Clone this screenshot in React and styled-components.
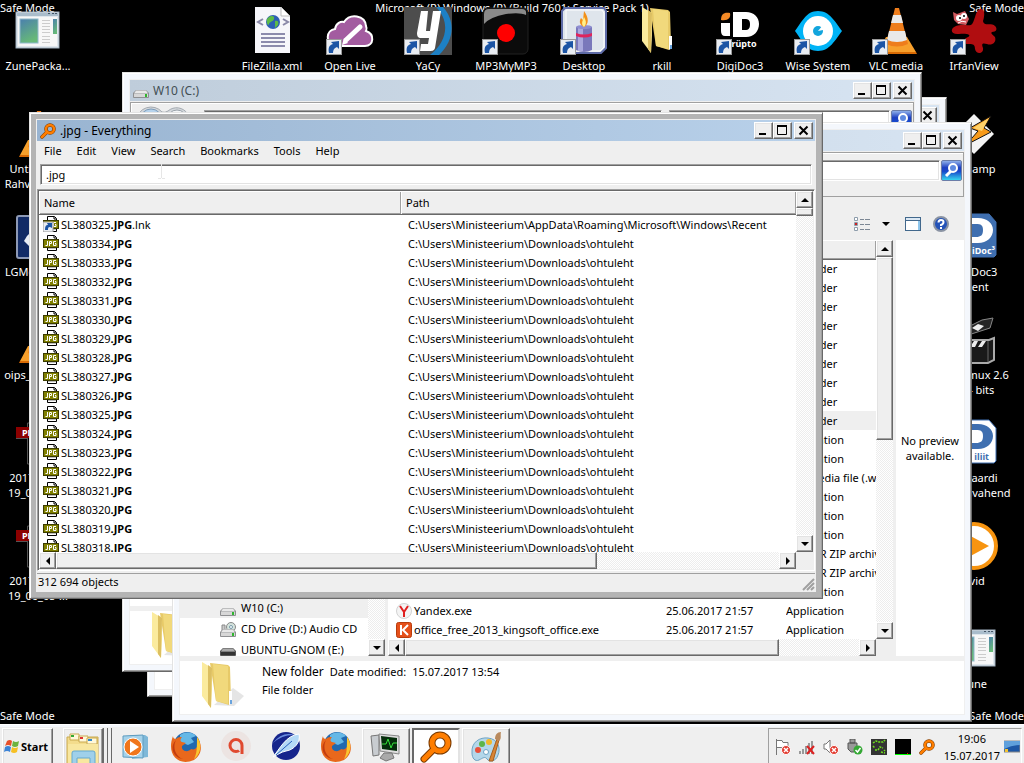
import React from "react";
import styled, { createGlobalStyle, css } from "styled-components";

const face = "#efefef";
const checker = "repeating-conic-gradient(#ffffff 0 25%, #ededed 0 50%) 0 0 / 2px 2px";

const Global = createGlobalStyle`
  html, body { margin: 0; height: 100%; }
  #root { height: 100%; }
  *, *::before, *::after { box-sizing: border-box; }
  body, button, input, table { font-family: "Noto Sans", "Open Sans", sans-serif; font-size: 11px; line-height: 15px; color: #000; }
  button { padding: 0; border: 0; background: none; }
`;

const raised = css`
  background: ${face};
  border: 1px solid;
  border-color: #fff #696969 #696969 #fff;
  box-shadow: inset -1px -1px 0 #a0a0a0, inset 1px 1px 0 #e3e3e3;
`;

/* ---------- desktop ---------- */

const Screen = styled.div`
  height: 100%;
  display: flex;
  flex-direction: column;
  overflow: hidden;
  background: #000;
`;

const Desktop = styled.main`
  position: relative;
  flex: 1;
  min-height: 0;
  overflow: hidden;
  color: #fff;
`;

const Watermark = styled.div`
  position: absolute;
  ${(p) => (p.$bottom ? "bottom: 0;" : "top: 0;")}
  ${(p) => (p.$right ? "right: 0;" : "left: 0;")}
  ${(p) => p.$center && "right: 0; text-align: center;"}
  line-height: 16px;
  white-space: nowrap;
`;

const Shortcut = styled.button`
  position: absolute;
  left: ${(p) => p.$x}px;
  top: ${(p) => p.$y}px;
  width: 78px;
  display: flex;
  flex-direction: column;
  align-items: center;
  gap: 3px;
  color: #fff;
  text-align: center;
  white-space: pre;
`;

const Picture = styled.svg`
  display: block;
  width: ${(p) => p.$size || 48}px;
  height: ${(p) => p.$size || 48}px;
  flex: none;
`;

const Pointer = styled.svg`
  position: absolute;
  left: 157px;
  top: 164px;
  width: 8px;
  height: 15px;
`;

/* ---------- pictures ---------- */

const Pic = ({ size, box = 48, children }) => (
  <Picture $size={size} viewBox={`0 0 ${box} ${box}`} aria-hidden="true">{children}</Picture>
);

const Arrow = () => (
  <g>
    <rect x="0.5" y="32.5" width="15" height="15" fill="#e9edf2" stroke="#9a9a9a" />
    <path d="M3 46c-1-5 0-8 4-9l-2-2 8-1v8l-2-2c-3 1-4 3-4 6z" fill="#1c55a5" />
  </g>
);

const WindowPic = () => (
  <Pic>
    <rect x="2" y="5" width="43" height="36" fill="#dfe6ec" stroke="#9fb0bf" />
    <rect x="3" y="6" width="41" height="3" fill="#a9bccb" />
    <path d="M34 6.500h2M38 6.500h2M41 6.500h2" stroke="#456" />
    <rect x="4" y="10" width="39" height="29" fill="#f7f7f7" />
    <defs>
      <linearGradient id="zune" x1="0" y1="0" x2="0.4" y2="1">
        <stop offset="0" stopColor="#4a7fae" /><stop offset="1" stopColor="#67b978" />
      </linearGradient>
    </defs>
    <rect x="6" y="12" width="18" height="24" fill="url(#zune)" stroke="#8fb8cc" />
    <path d="M28 13.500h8M28 16.500h8M28 19.500h8M28 22.500h8M28 25.500h8M28 29.500h8M28 32.500h8M28 35.500h8" stroke="#ccc" />
    <rect x="39" y="12" width="4" height="15" fill="url(#zune)" />
  </Pic>
);

const XmlPic = () => (
  <Pic>
    <path d="M7 0h26l9 9v37H7z" fill="#f6f6fa" />
    <path d="M33 0v9h9z" fill="#fff" stroke="#bbb" />
    <circle cx="25" cy="15" r="7" fill="#2d5fb4" />
    <path d="M21 10c3-2 6-1 5 2s-4 2-5 5-3-2-2-5zM27 14c3-1 4 1 3 4l-3 3z" fill="#5dbb46" />
    <path d="M15 12l-5 3 5 3M35 12l5 3-5 3" fill="none" stroke="#8a89a8" strokeWidth="2" />
    <path d="M13 27h24M13 31h24M13 35h24M13 39h24" stroke="#8c8bac" strokeWidth="2" />
  </Pic>
);

const CloudPic = () => (
  <Pic>
    <path d="M8 39C-1 36 0 23 9 22c1-6 6-8 9-7 6-9 21-7 22 4 1 2 1 3 0 5 9 3 8 15-1 15z" fill="#a35ca0" stroke="#fff" strokeWidth="2" />
    <path d="M16 38l2-7 4 5z" fill="#fff" />
    <path d="M20 33l14-13" stroke="#fff" strokeWidth="5" strokeLinecap="round" />
    <Arrow />
  </Pic>
);

const YacyPic = () => (
  <Pic>
    <rect width="48" height="48" fill="#4d4d4d" />
    <path d="M32 0c14 14 12 34-6 48h9c15-14 17-34 4-48z" fill="#1d80c4" />
    <path d="M17 4h7l-2 20h4l3-20h8l-6 37c-1 3-3 3-6 3h-9l1-7h7l1-6h-8c-3 0-4-2-4-5z" fill="#fff" />
    <Arrow />
  </Pic>
);

const RecordPic = () => (
  <Pic>
    <rect x="1" y="1" width="45" height="46" rx="5" fill="#0b0b0b" stroke="#222" />
    <path d="M2 7q0-5 5-5h33q5 0 4 6-6-3-20-1Q8 10 2 17z" fill="#aaa" opacity="0.800" />
    <circle cx="24" cy="26" r="9" fill="#f00" />
    <Arrow />
  </Pic>
);

const CandlePic = () => (
  <Pic>
    <path d="M5 1h39l2 3v37l-5 5H5l-3-3V4z" fill="#dfe5ec" stroke="#5d6aa6" strokeWidth="2" />
    <path d="M6 3h36l2 3v34l-4 4H6z" fill="none" stroke="#fff" />
    <path d="M16 20h16v23q-8 4-16 0z" fill="#7a78bb" />
    <path d="M18 20h5v24h-5z" fill="#aaa9dd" />
    <ellipse cx="24" cy="20" rx="8" ry="2" fill="#8f8ed0" />
    <path d="M16 26q8 3 16 0v3q-8 3-16 0z" fill="#e0245c" />
    <path d="M24 4c5 7 5 13 0 16-6-3-4-7-3-9l2 2z" fill="#f39019" />
    <path d="M24 10c3 5 2 8 0 10-3-3-2-5 0-10z" fill="#fff08a" />
    <Arrow />
  </Pic>
);

const FolderShape = ({ shadow }) => (
  <g>
    {shadow && <path d="M14 43l20 1 10-10-11-8z" fill="#ccc" opacity="0.500" />}
    <path d="M10 1l18 2 2 2 1 33-2 5-13-4z" fill="#e7ca68" />
    <path d="M13 2l15 2v38l-12-3z" fill="#f1d97c" />
    <path d="M2 0l10 6v22l-1 18-9-12z" fill="#fbeb9e" />
    <path d="M8 3l4 3-1 40-3-4z" fill="#dcbf62" />
    <path d="M29 29h3v12l-3 2z" fill="#fff" /><path d="M30 38h2v4h-2z" fill="#6aa4dd" />
  </g>
);

const FolderPic = () => <Pic><g transform="translate(2 0)"><FolderShape /></g></Pic>;

const DigiPic = () => (
  <Pic>
    <path d="M5 16h9v13H9q-4 0-4-5z" fill="#fff" />
    <path d="M5 13c0-6 3-8 9-7 1 5-2 8-9 7z" fill="#f58a26" />
    <path d="M17 5h13c8 0 13 5 13 12s-5 13-13 13H17zM26 12v11h3c4 0 5-2 5-6s-2-5-5-5z" fill="#fff" fillRule="evenodd" />
    <text x="28" y="40" fontSize="9" fontWeight="700" fill="#fff" textAnchor="middle">rüpto</text>
    <Arrow />
  </Pic>
);

const EyePic = () => (
  <Pic>
    <path d="M1 24C8 15 12 4 24 4s17 11 24 20c-7 9-12 20-24 20S8 33 1 24z" fill="#00b3f6" />
    <circle cx="24" cy="24" r="15" fill="#fff" />
    <circle cx="24" cy="24" r="5" fill="#12a5dd" />
    <path d="M24 24l5-6v5z" fill="#fff" />
    <Arrow />
  </Pic>
);

const ConePic = ({ arrow }) => (
  <Pic>
    <path d="M14 30h21l9 15H6z" fill="#f7a02c" /><path d="M6 45h38l1 2H5z" fill="#d96b05" />
    <path d="M23 1h4l9 36q-11 5-22 0z" fill="#ee7d1c" />
    <path d="M21 8h8l2 8H19zM17 24h16l2 9q-10 4-20 0z" fill="#e9e9e9" />
    {arrow && <Arrow />}
  </Pic>
);

const SplatPic = () => (
  <Pic>
    <path d="M21 18c4-2 4-15 9-16s5 6 3 12c1 6 8 1 12 5 3 3 1 6-3 6-2 1 1 3 3 5 2 6-4 9-8 7-4-1-6-1-4 4 1 6-7 7-8 1 0-6-4-5-8-5s-5-5 1-7c4-2-1-4-9-3-9 1-9-6-3-8s10 0 15-1z" fill="#b00d10" />
    <path d="M3 5l4 2 8-3 4 8-3 6-8-1-4-4z" fill="#d25a60" />
    <circle cx="9" cy="11" r="3" fill="#fff" /><circle cx="14" cy="9" r="3" fill="#fff" />
    <circle cx="10" cy="11" r="1" /><circle cx="14" cy="9" r="1" /><path d="M8 16q4-3 8-1" stroke="#fff" fill="none" />
    <Arrow />
  </Pic>
);

const BoltPic = () => (
  <Pic>
    <path d="M24 4l20 20-20 20L4 24z" fill="#f4f4f4" />
    <path d="M41 6L20 18l8 3-12 14 25-13-7-4z" fill="#f79a19" stroke="#111" />
    <path d="M39 8L23 18l9 3" fill="#ffd26a" />
  </Pic>
);

const BadgePic = ({ word, inverse }) => {
  const paper = inverse ? "#fff" : "#3f6fb0";
  const ink = inverse ? "#3f6fb0" : "#fff";
  return (
    <Pic>
      <path d="M3 1h36l7 8v33l-2 2H3z" fill={paper} stroke="#3f6fb0" />
      <path d="M8 5h20c9 0 15 5 15 12s-6 13-15 13H8zM22 11v13h4c5 0 7-2 7-7s-2-6-7-6z" fill={ink} fillRule="evenodd" />
      <text x={inverse ? 39 : 45} y="41" fontSize="9" fontWeight="700" fill={ink} textAnchor="end">{word}</text>
    </Pic>
  );
};

const ClapperPic = () => (
  <Pic>
    <path d="M8 16L32 4l11-2-3 10-28 9z" fill="#252525" stroke="#888" />
    <path d="M22 12l6-4 6 2-6 5z" fill="#eee" />
    <path d="M5 24h34l5-2v22l-6 3H5z" fill="#1a1a1a" stroke="#aaa" strokeWidth="2" />
    <path d="M24 25h4l-3 6h-5zM32 25h4l-4 6h-4z" fill="#eee" />
    <path d="M38 25v21" stroke="#666" />
  </Pic>
);

const PlayPic = () => (
  <Pic>
    <circle cx="24" cy="24" r="22" fill="#fff" stroke="#f79410" strokeWidth="4" />
    <path d="M15 11l24 13-24 13z" fill="#f79410" />
  </Pic>
);

const PdfPic = () => (
  <Pic>
    <path d="M13.500 4v41h27V4z" fill="#000" stroke="#555" />
    <rect x="2" y="8" width="31" height="11" fill="#8c0000" />
    <path d="M2 19.500h11" stroke="#555" />
    <text x="8" y="17" fontSize="9" fontWeight="700" fill="#fff">PDF</text>
  </Pic>
);

const BluePic = () => (
  <Pic>
    <rect x="3" y="3" width="42" height="42" rx="2" fill="#122b66" stroke="#8d99b5" strokeWidth="2" />
    <path d="M10 28q3-6 8-10v18z" fill="#e8ecf4" />
  </Pic>
);

const Lens = ({ size }) => (
  <Pic size={size} box={32}>
    <path d="M14 18L4 28" stroke="#7a3a00" strokeWidth="7" strokeLinecap="round" />
    <circle cx="20" cy="12" r="8" fill="none" stroke="#7a3a00" strokeWidth="7" />
    <path d="M14 18L4 28" stroke="#ff7e00" strokeWidth="5" strokeLinecap="round" />
    <circle cx="20" cy="12" r="8" fill="none" stroke="#ff7e00" strokeWidth="5" />
  </Pic>
);

const Drive = ({ kind }) => (
  <Pic size={16} box={16}>
    {kind === "cd" && <g><circle cx="11" cy="5" r="4.500" fill="#d5e4dd" stroke="#888" /><circle cx="11" cy="5" r="1.500" fill="#fff" stroke="#79a" /><path d="M2 3h3v6H2z" fill="#ccc" stroke="#888" /></g>}
    <path d="M3 7h10l3 3v4q0 1-1 1H1q-1 0-1-1v-4z" fill={kind === "usb" ? "#555" : "#8f9092"} />
    <path d="M3 7.500h10l2 3H1z" fill={kind === "usb" ? "#aaa" : "#e9e9e9"} />
    <path d="M1 11h14v3H1z" fill={kind === "usb" ? "#333" : "#d7d7d7"} />
    {kind !== "usb" && <path d="M12 11h2v3h-2z" fill="#2fb52f" />}
  </Pic>
);

const JpgIcon = ({ link }) => (
  <Pic size={16} box={16}>
    <path d="M4.500.5h7l2 2v13h-9z" fill="#fff" stroke="#000" />
    <path d="M11 1v2h2" fill="none" stroke="#000" />
    <path d="M5 13.500h8" stroke="#bbb" />
    <rect x="0.500" y="4.500" width="15" height="8" fill="#808000" stroke="#3c3c00" />
    <path d="M4.500 6v4.500h-2M6.500 11V6.500h2v2h-2M13 6.500h-2.500v4h2.500v-2h-1" fill="none" stroke="#fff" />
    {link && <g><rect y="6" width="10" height="10" fill="#e9edf2" stroke="#999" /><path d="M2 14c0-4 1-5 3-5l-1-2h5v5l-2-1c-2 0-2 1-2 3z" fill="#1c55a5" /></g>}
  </Pic>
);

const AppIcon = ({ kind }) =>
  kind === "yandex" ? (
    <Pic size={16} box={16}>
      <circle cx="8" cy="8" r="7.500" fill="#f4f4f4" stroke="#d2d2d2" />
      <path d="M4 3l4 6 4-6M8 8v6" fill="none" stroke="#e02020" strokeWidth="2" />
    </Pic>
  ) : (
    <Pic size={16} box={16}>
      <rect x="0.500" y="0.500" width="15" height="15" rx="2" fill="#e5501a" stroke="#b83c0c" />
      <path d="M5 3v10M12 3L7 8l5 5" fill="none" stroke="#fff" strokeWidth="2" />
    </Pic>
  );

/* ---------- window chrome ---------- */

const Frame = styled.section`
  position: absolute;
  left: ${(p) => p.$x}px;
  top: ${(p) => p.$y}px;
  width: ${(p) => p.$w}px;
  height: ${(p) => p.$h}px;
  display: flex;
  flex-direction: column;
  padding: 6px;
  color: #000;
  background: ${(p) => (p.$active ? "#b4b4b4" : "#f4f7fc")};
  border: 1px solid;
  border-color: #e3e3e3 #696969 #696969 #e3e3e3;
  box-shadow: inset 1px 1px 0 #fff, inset -1px -1px 0 #a0a0a0;
`;

const Client = styled.div`
  flex: 1;
  min-height: 0;
  display: flex;
  flex-direction: column;
  border: 1px solid ${face};
  background: ${face};
`;

const TitleBar = styled.header`
  flex: none;
  height: 21px;
  display: flex;
  align-items: center;
  gap: 4px;
  padding: 0 2px 0 3px;
  font-size: 12px;
  color: ${(p) => (p.$active ? "#000" : "#434e54")};
  background: ${(p) => (p.$active ? "linear-gradient(90deg, #99b4d1, #b9d1ea)" : "linear-gradient(90deg, #bfcddb, #d7e4f2)")};
`;

const TitleText = styled.h2`
  margin: 0;
  flex: 1;
  font: inherit;
`;

const Controls = styled.div`
  display: flex;
  button:last-child { margin-left: 2px; }
`;

const ControlButton = styled.button`
  ${raised}
  width: 19px;
  height: 17px;
  display: grid;
  place-items: center;
`;

const WindowControls = () => (
  <Controls>
    <ControlButton aria-label="Minimize"><Pic size={11} box={11}><path d="M1 9h7" stroke="#000" strokeWidth="2" /></Pic></ControlButton>
    <ControlButton aria-label="Maximize"><Pic size={11} box={11}><path d="M.5 1v8.500h9V1" fill="none" stroke="#000" /><path d="M0 1h10" stroke="#000" strokeWidth="2" /></Pic></ControlButton>
    <ControlButton aria-label="Close"><Pic size={11} box={11}><path d="M1.500 1.500l8 8M9.500 1.500l-8 8" stroke="#000" strokeWidth="2" /></Pic></ControlButton>
  </Controls>
);

/* ---------- scroll bars ---------- */

const Track = styled.div`
  flex: none;
  display: flex;
  flex-direction: ${(p) => (p.$across ? "row" : "column")};
  ${(p) => (p.$across ? "height: 17px;" : "width: 17px;")}
  background: ${checker};
`;

const ScrollButton = styled.button`
  ${raised}
  flex: none;
  width: 17px;
  height: 17px;
  display: grid;
  place-items: center;
`;

const Thumb = styled.div`
  ${raised}
  flex: 0 0 ${(p) => p.$size}px;
`;

const Space = styled.div`
  flex: 1;
`;

const glyphs = {
  Up: "M4 2l4 4H0z",
  Down: "M0 2h8L4 6z",
  Left: "M2 4l4-4v8z",
  Right: "M2 0l4 4-4 4z",
};

const Arrowhead = ({ to }) => (
  <ScrollButton aria-label={`Scroll ${to.toLowerCase()}`}>
    <Pic size={8} box={8}><path d={glyphs[to]} /></Pic>
  </ScrollButton>
);

const ScrollBar = ({ across, size }) => (
  <Track $across={across}>
    <Arrowhead to={across ? "Left" : "Up"} />
    <Thumb $size={size} />
    <Space />
    <Arrowhead to={across ? "Right" : "Down"} />
  </Track>
);

/* ---------- Explorer ---------- */

const AddressBar = styled.div`
  flex: none;
  height: 45px;
  display: flex;
  align-items: center;
  gap: 1px;
  margin-top: 1px;
  padding: 0 1px 9px 4px;
  border: 1px solid #a0a0a0;
  box-shadow: inset 1px 1px 0 #fff;
`;

const NavButtons = styled.svg`
  width: 56px;
  height: 28px;
  margin-right: 12px;
`;

const Field = styled.input`
  min-width: 0;
  height: 21px;
  padding: 0 5px;
  flex: 1;
  border: 1px solid;
  border-color: #a0a0a0 #fff #fff #a0a0a0;
  border-radius: 0;
  box-shadow: inset 1px 1px 0 #696969, inset -1px -1px 0 #e3e3e3;
  background: #fff;
  outline: 0;
`;

const AddressField = styled(Field)`
  flex: 0 0 458px;
  margin-right: 6px;
  background: ${face};
`;

const SearchButton = styled.button`
  flex: none;
  width: 21px;
  height: 21px;
  display: grid;
  place-items: center;
  border: 1px solid #6b7da8;
  border-radius: 2px;
  background: linear-gradient(#8fb0ea 0, #1d3fc0 35%, #1849cc 55%, #35d4ee);
`;

const CommandBar = styled.div`
  flex: none;
  height: 43px;
  display: flex;
  align-items: center;
  justify-content: flex-end;
  gap: 12px;
  padding: 10px 15px 0 0;
`;

const ToolButton = styled.button`
  width: ${(p) => (p.$slim ? 8 : 16)}px;
  height: ${(p) => (p.$slim ? 8 : 16)}px;
  ${(p) => p.$slim && "margin-right: 3px;"}
`;

const Panes = styled.div`
  flex: 1;
  min-height: 0;
  display: flex;
  gap: 3px;
`;

const Tree = styled.nav`
  flex: 0 0 205px;
  display: flex;
`;

const TreeList = styled.ul`
  flex: 1;
  margin: 0;
  padding: 0;
  display: flex;
  flex-direction: column;
  justify-content: flex-end;
  overflow: hidden;
  background: #fff;
  list-style: none;
`;

const TreeItem = styled.li`
  flex: none;
  height: ${(p) => (p.$cut ? 17 : 21)}px;
  display: flex;
  align-items: ${(p) => (p.$cut ? "flex-start" : "center")};
  gap: 5px;
  padding-left: 40px;
  line-height: 21px;
  white-space: nowrap;
  overflow: hidden;
  background: ${(p) => (p.$on ? face : "#fff")};
  svg { margin-top: 2px; }
`;

const Column = styled.div`
  flex: 1;
  min-width: 0;
  display: flex;
  flex-direction: column;
`;

const Row = styled.div`
  flex: 1;
  min-height: 0;
  display: flex;
`;

const HorizontalRow = styled.div`
  flex: none;
  display: flex;
`;

const Wide = styled.div`
  flex: 1;
  min-width: 0;
`;

const Sheet = styled.div`
  flex: 1;
  min-width: 0;
  overflow: hidden;
  background: #fff;
`;

const Grid = styled.table`
  width: 100%;
  table-layout: fixed;
  border-collapse: collapse;
  th {
    height: ${(p) => p.$head}px;
    padding: 0 5px;
    font-weight: 400;
    text-align: left;
    background: ${face};
    border-bottom: 1px solid #696969;
    box-shadow: inset 1px 1px 0 #fff, inset -1px -1px 0 #a0a0a0;
  }
  td {
    height: 19px;
    padding: 0;
    white-space: nowrap;
    overflow: hidden;
  }
`;

const FileRow = styled.tr`
  background: ${(p) => (p.$on ? face : "transparent")};
`;

const NameCell = styled.div`
  display: flex;
  align-items: center;
  gap: 2px;
  height: 19px;
  padding-left: ${(p) => p.$indent}px;
`;

const Corner = styled.div`
  flex: none;
  width: 17px;
  background: ${face};
`;

const Preview = styled.aside`
  flex: 0 0 68px;
  display: flex;
  align-items: center;
  justify-content: center;
  text-align: center;
  background: #fff;
`;

const Details = styled.footer`
  flex: 0 0 58px;
  display: flex;
  padding: 1px 0 0 20px;
  gap: 14px;
  border-top: 5px solid ${face};
  background: #fff;
`;

const DetailText = styled.div`
  display: flex;
  flex-direction: column;
  gap: 3px;
  padding-top: 2px;
`;

const DetailLine = styled.div`
  display: flex;
  gap: 6px;
  strong { font-size: 12px; font-weight: 400; }
`;

const files = [
  ...Array.from({ length: 9 }, () => ({ type: "File folder" })),
  { type: "Application" },
  { type: "Application" },
  { type: "VLC media file (.wmv)" },
  { type: "Application" },
  { type: "Application" },
  { type: "Application" },
  { type: "WinRAR ZIP archive" },
  { type: "WinRAR ZIP archive" },
  { type: "Application" },
  { type: "Application", name: "Yandex.exe", icon: "yandex", date: "25.06.2017 21:57" },
  { type: "Application", name: "office_free_2013_kingsoft_office.exe", icon: "office", date: "25.06.2017 21:57" },
];

const Explorer = ({ x, y, title, contents }) => (
  <Frame $x={x} $y={y} $w={800} $h={600} aria-label={title || "Folder"}>
    <Client>
      <TitleBar>
        <Drive />
        <TitleText>{title}</TitleText>
        <WindowControls />
      </TitleBar>
      <AddressBar>
        <NavButtons viewBox="0 0 56 28" aria-hidden="true">
          <path d="M2 14a14 13 0 0 1 25-8q3 1 6-1a13 13 0 1 1-4 13 14 13 0 0 1-27-4z" fill="#d4d8dc" stroke="#a3a9b0" />
          <circle cx="16" cy="14" r="11" fill="#b7d3ec" stroke="#7d9bb8" />
          <circle cx="42" cy="14" r="10" fill="#f2f4f6" stroke="#9aa2aa" />
        </NavButtons>
        <AddressField aria-label="Address" />
        <Field aria-label="Search folder" />
        <SearchButton aria-label="Search">
          <Pic size={17} box={17}><path d="M8 9l-5 5" stroke="#fff" strokeWidth="3" /><circle cx="10" cy="6" r="4" fill="#5f8ae0" stroke="#fff" strokeWidth="2" /></Pic>
        </SearchButton>
      </AddressBar>
      <CommandBar>
        <ToolButton aria-label="View">
          <Pic size={16} box={16}>
            <path d="M.5 1.500h3v3h-3zM.5 6.500h3v3h-3zM.5 11.500h3v3h-3z" fill="#fff" stroke="#8d9cab" />
            <path d="M6 3.500h4m1 0h5M6 8.500h4m1 0h5M6 13.500h4m1 0h5" stroke="#7c8794" />
            <path d="M1 7h2v2H1z" fill="#c22" />
          </Pic>
        </ToolButton>
        <ToolButton $slim aria-label="More views"><Pic size={8} box={8}><path d="M0 2h8L4 6z" /></Pic></ToolButton>
        <ToolButton aria-label="Preview pane">
          <Pic size={16} box={16}>
            <rect x="0.500" y="1.500" width="15" height="13" fill="#fff" stroke="#42688c" />
            <path d="M1 3h14" stroke="#dbe8f4" strokeWidth="2" /><path d="M1 4.500h14" stroke="#42688c" /><path d="M13 5h2v9h-2z" fill="#8fc6ec" />
          </Pic>
        </ToolButton>
        <ToolButton aria-label="Help">
          <Pic size={16} box={16}>
            <circle cx="8" cy="8" r="7" fill="#2453b8" stroke="#8a93a3" strokeWidth="2" />
            <path d="M5.500 6.500q0-2.500 2.500-2.500t2.500 2-2.500 3v1" fill="none" stroke="#fff" strokeWidth="2" /><path d="M7 11h2v2H7z" fill="#fff" />
          </Pic>
        </ToolButton>
      </CommandBar>
      <Panes>
        {contents ? (
          <>
            <Tree aria-label="Folders">
              <TreeList>
                <TreeItem $on><Drive />W10 (C:)</TreeItem>
                <TreeItem><Drive kind="cd" />CD Drive (D:) Audio CD</TreeItem>
                <TreeItem $cut><Drive kind="usb" />UBUNTU-GNOM (E:)</TreeItem>
              </TreeList>
              <ScrollBar size={120} />
            </Tree>
            <Column>
              <Row>
                <Sheet>
                  <Grid $head={19}>
                    <colgroup><col width="278" /><col width="120" /><col /></colgroup>
                    <thead><tr><th aria-label="Name" /><th aria-label="Date modified" /><th aria-label="Type" /></tr></thead>
                    <tbody>
                      {files.map((f, i) => (
                        <FileRow key={i} $on={i === 8}>
                          <td>{f.name && <NameCell $indent={8}><AppIcon kind={f.icon} />{f.name}</NameCell>}</td>
                          <td>{f.date}</td>
                          <td>{f.type}</td>
                        </FileRow>
                      ))}
                    </tbody>
                  </Grid>
                </Sheet>
                <ScrollBar size={183} />
              </Row>
              <HorizontalRow>
                <Wide><ScrollBar across size={374} /></Wide>
                <Corner />
              </HorizontalRow>
            </Column>
            <Preview>No preview available.</Preview>
          </>
        ) : (
          <Sheet />
        )}
      </Panes>
      <Details>
        <Pic size={48}><FolderShape shadow /></Pic>
        {contents && (
          <DetailText>
            <DetailLine><strong>New folder</strong><span>Date modified:</span><span>15.07.2017 13:54</span></DetailLine>
            <div>File folder</div>
          </DetailText>
        )}
      </Details>
    </Client>
  </Frame>
);

/* ---------- Everything ---------- */

const MenuBar = styled.nav`
  flex: none;
  height: 20px;
  display: flex;
  align-items: center;
  gap: 1px;
  padding-bottom: 2px;
`;

const MenuItem = styled.button`
  padding: 0 7px;
`;

const SearchRow = styled.label`
  flex: none;
  display: flex;
  padding: 3px 3px 4px;
`;

const ListBox = styled.div`
  flex: 1;
  min-height: 0;
  display: flex;
  flex-direction: column;
  padding: 1px;
  border: 1px solid;
  border-color: #a0a0a0 #fff #fff #a0a0a0;
  box-shadow: inset 1px 1px 0 #696969;
`;

const StatusBar = styled.footer`
  flex: none;
  height: 18px;
  display: flex;
  align-items: flex-start;
  justify-content: space-between;
  margin-top: 2px;
  padding-left: 1px;
  border-top: 1px solid #a0a0a0;
  svg { align-self: flex-end; }
`;

const results = [
  { name: "SL380325", tail: ".lnk", path: "C:\\Users\\Ministeerium\\AppData\\Roaming\\Microsoft\\Windows\\Recent" },
  ...Array.from({ length: 17 }, (_, i) => ({ name: `SL380${334 - i}`, path: "C:\\Users\\Ministeerium\\Downloads\\ohtuleht" })),
];

const Everything = () => (
  <Frame $active $x={29} $y={112} $w={794} $h={487} aria-label="Everything">
    <Client>
      <TitleBar $active>
        <Lens size={16} />
        <TitleText>.jpg - Everything</TitleText>
        <WindowControls />
      </TitleBar>
      <MenuBar>
        {["File", "Edit", "View", "Search", "Bookmarks", "Tools", "Help"].map((m) => <MenuItem key={m}>{m}</MenuItem>)}
      </MenuBar>
      <SearchRow><Field aria-label="Search" defaultValue=".jpg" /></SearchRow>
      <ListBox>
        <Row>
          <Sheet>
            <Grid $head={23}>
              <colgroup><col width="362" /><col /></colgroup>
              <thead><tr><th>Name</th><th>Path</th></tr></thead>
              <tbody>
                {results.map((r) => (
                  <FileRow key={r.name + (r.tail || "")}>
                    <td><NameCell $indent={4}><JpgIcon link={!!r.tail} /><span>{r.name}<b>.JPG</b>{r.tail}</span></NameCell></td>
                    <td><NameCell $indent={7}>{r.path}</NameCell></td>
                  </FileRow>
                ))}
              </tbody>
            </Grid>
          </Sheet>
          <ScrollBar size={8} />
        </Row>
        <HorizontalRow>
          <Wide><ScrollBar across size={541} /></Wide>
          <Corner />
        </HorizontalRow>
      </ListBox>
      <StatusBar>
        <span>312 694 objects</span>
        <Pic size={13} box={13}><path d="M1 12L12 1M5 12l7-7M9 12l3-3" stroke="#a0a0a0" strokeWidth="2" /></Pic>
      </StatusBar>
    </Client>
  </Frame>
);

/* ---------- task bar ---------- */

const TaskBar = styled.footer`
  flex: 0 0 39px;
  display: flex;
  align-items: flex-start;
  padding: 3px 2px 0 2px;
  overflow: hidden;
  border-top: 1px solid #fff;
  background: ${face};
  box-shadow: inset 0 2px 0 #f4f7fc;
`;

const StartButton = styled.button`
  ${raised}
  width: 51px;
  height: 40px;
  display: flex;
  align-items: center;
  gap: 1px;
  margin-right: 10px;
  padding: 0 0 4px 1px;
  font-weight: 700;
`;

const Task = styled.button`
  width: 48px;
  height: 40px;
  margin-right: 2px;
  display: flex;
  justify-content: center;
  padding-top: 2px;
  ${(p) => p.$look === "open" && raised}
  ${(p) => p.$look === "pressed" && "background: #fff; border: 2px solid; border-color: #696969 #e3e3e3 #fff #696969; padding-top: 1px;"}
`;

const Stack = styled.div`
  width: 49px;
  height: 40px;
  display: flex;
  border-right: 1px solid #696969;
  box-shadow: inset -3px 0 0 ${face}, inset -4px 0 0 #696969, inset -7px 0 0 ${face}, inset -8px 0 0 #696969;
  ${Task} { width: 40px; margin: 0; }
`;

const Tray = styled.div`
  margin-left: auto;
  height: 40px;
  display: flex;
  align-items: flex-start;
  gap: 8px;
  padding: 10px 1px 0 6px;
  border: 1px solid #a0a0a0;
  border-right-color: #fff;
`;

const Clock = styled.time`
  margin: -9px -4px 0 1px;
  line-height: 17px;
  text-align: center;
  white-space: pre;
`;

const Fox = () => (
  <Pic size={32} box={32}>
    <circle cx="17" cy="15" r="13" fill="#2168ae" />
    <path d="M10 5c5-4 13-3 16 1l-5 2 3 4-6 3-8-3z" fill="#65b8e6" />
    <path d="M3 6c0 2 1 3 3 3 2-2 4-2 6-2-2 2-2 4 0 5l4 1-4 3c-1 5 6 7 9 3 6 2 8-4 6-12 6 8 5 18-3 23C8 37-4 24 3 6z" fill="#e8681c" />
    <path d="M27 7c6 8 3 18-3 22 3-5 3-12 3-22z" fill="#fbc62f" />
    <path d="M6 10c-4 8 0 17 7 19C3 28-1 17 6 10z" fill="#c23c10" />
  </Pic>
);

const RedCross = () => (
  <g><circle cx="11" cy="11" r="4.500" fill="#e23b30" stroke="#fff" /><path d="M9 9l4 4M13 9l-4 4" stroke="#fff" strokeWidth="1.500" /></g>
);

const Bar = () => (
  <TaskBar>
    <StartButton>
      <Pic size={16} box={16}>
        <path d="M3 3q3-2 5 0L7 8Q4 6 1 8z" fill="#e8502a" /><path d="M9 3q3 2 6 0l-1 5q-3 2-6 0z" fill="#6db33f" />
        <path d="M1 9q3-2 6 0l-1 5q-3-2-6 0z" fill="#3d84d6" /><path d="M8 9q3 2 6 0l-1 5q-3 2-6 0z" fill="#f6c024" />
      </Pic>
      Start
    </StartButton>
    <Stack>
      <Task $look="open" aria-label="Windows Explorer">
        <Pic size={34} box={34}>
          <path d="M1 6h10l2 2h8l2-2h9v28H1z" fill="#f3dc8c" stroke="#c9a94e" />
          <path d="M4 3h9v6H4z" fill="#fff8da" stroke="#c9a94e" /><path d="M13 5h9v6h-9z" fill="#fff8da" stroke="#c9a94e" /><path d="M21 7h10v6H21z" fill="#fff8da" stroke="#c9a94e" />
          <path d="M5 4h3v2H5z" fill="#3a3" /><path d="M14 6h3v2h-3z" fill="#d33" /><path d="M22 8h4v2h-4z" fill="#38c" />
          <path d="M2 13h30v20H2z" fill="#f8e7a0" />
          <path d="M6 34V22q0-2 2-2h19q2 0 2 2v12h-5v-7H11v7z" fill="#9fd0ea" stroke="#65a9cf" />
        </Pic>
      </Task>
    </Stack>
    <Task aria-label="Windows Media Player">
      <Pic size={32} box={32}>
        <path d="M10 5h15l3 2v20l-16 2z" fill="#7fb8d8" /><path d="M3 6l20-1v23L3 27z" fill="#a5d2ea" stroke="#5e9cc0" />
        <circle cx="13" cy="17" r="9" fill="#f0761c" stroke="#fff" /><path d="M10 11l9 6-9 6z" fill="#fff" />
      </Pic>
    </Task>
    <Task aria-label="Firefox"><Fox /></Task>
    <Task aria-label="Avira">
      <Pic size={32} box={32}>
        <circle cx="16" cy="16" r="15" fill="#ece4e2" />
        <path d="M22 24V15.500a6 6 0 1 0-6 6q2 0 3-1" fill="none" stroke="#e0492f" strokeWidth="3" />
      </Pic>
    </Task>
    <Task aria-label="SeaMonkey">
      <Pic size={32} box={32}>
        <circle cx="16" cy="16" r="14" fill="#16258c" /><path d="M3 13Q12 1 25 5q-12-1-22 8z" fill="#6b8fe0" />
        <path d="M3 27C9 20 16 5 29 4c2 8-5 16-13 17-5 1-9 4-13 6z" fill="#b4daf7" stroke="#fff" />
        <path d="M6 25L22 11" stroke="#2961bd" />
      </Pic>
    </Task>
    <Task aria-label="Firefox second profile"><Fox /></Task>
    <Task $look="open" aria-label="Task Manager">
      <Pic size={32} box={32}>
        <path d="M1 5l8-1v20l-6 1z" fill="#c8ccd0" stroke="#777" /><path d="M9 3l20 2v18L10 20z" fill="#ddd" stroke="#888" />
        <path d="M11 5l16 2v13L12 18z" fill="#062e0c" /><path d="M12 13h4l2-5 3 9 2-5h4" fill="none" stroke="#36e23b" />
        <path d="M14 22h8l2 5-8 3-6-3z" fill="#aaa" stroke="#777" />
      </Pic>
    </Task>
    <Task $look="pressed" aria-label="Everything"><Lens size={32} /></Task>
    <Task $look="open" aria-label="Paint">
      <Pic size={32} box={32}>
        <path d="M2 22C1 11 10 6 18 7c10 1 13 10 10 17-2 7-9 7-11 4s-4-1-8 1-7-2-7-7z" fill="#b4d7ea" stroke="#6da3c4" />
        <circle cx="8" cy="19" r="3" fill="#e8503a" /><circle cx="12" cy="13" r="3" fill="#5cb548" /><circle cx="19" cy="11" r="3" fill="#f2b829" /><circle cx="16" cy="21" r="2.500" fill="#fff" stroke="#6da3c4" />
        <path d="M19 30L27 8l2 1-6 21z" fill="#d98534" stroke="#a35d1e" /><path d="M25 8c0-4 2-7 6-7-1 4 1 6-2 9z" fill="#b98a5e" />
      </Pic>
    </Task>
    <Tray>
      <Pic size={16} box={16}><path d="M1.500 0v16M2 1.500h5l1 2h5v7H8l-1-2H2" fill="#fff" stroke="#777" /><RedCross /></Pic>
      <Pic size={16} box={16}><path d="M1 12v3M4 10v5M7 7v8M10 4v11M13 2v13" stroke="#999" strokeWidth="2" /><path d="M8 7l7 8M15 7l-7 8" stroke="#d22" strokeWidth="2" /></Pic>
      <Pic size={16} box={16}><path d="M1 5h2l4-4v13L3 10H1z" fill="#fff" stroke="#777" /><RedCross /></Pic>
      <Pic size={16} box={16}><path d="M3 0h5v4H3zM1 4h9v6l-3 3H4l-3-3z" fill="#999" stroke="#555" /><circle cx="11" cy="11" r="4.500" fill="#35a835" /><path d="M8.500 11l2 2 3-4" fill="none" stroke="#fff" strokeWidth="1.500" /></Pic>
      <Pic size={16} box={16}><rect width="16" height="16" fill="#333" /><path d="M2 4l3-2 3 1 4 0 2-2M2 7l2 2M4 11h3l2-3 3 1M10 13l4 1M13 11l1 1" fill="none" stroke="#6fe01c" strokeDasharray="2 1" strokeWidth="1.500" /></Pic>
      <Pic size={16} box={16}><rect width="16" height="16" /><path d="M0 15.500h16" stroke="#0f0" /><path d="M12 14.500h1" stroke="#f00" /></Pic>
      <Lens size={16} />
      <Clock>{"19:06\n15.07.2017"}</Clock>
      <Pic size={16} box={16}><path d="M0 2h16v11H0z" fill="#1d57a5" stroke="#888" /><path d="M0 2h16v4Q8 6 0 10z" fill="#5fa0dc" /><path d="M1 10h3v3H1z" fill="#f4c430" /></Pic>
    </Tray>
  </TaskBar>
);

const shortcuts = [
  [0, 0, "ZunePacka...", <WindowPic />],
  [3, 0, "FileZilla.xml", <XmlPic />],
  [4, 0, "Open Live", <CloudPic />],
  [5, 0, "YaCy", <YacyPic />],
  [6, 0, "MP3MyMP3", <RecordPic />],
  [7, 0, "Desktop", <CandlePic />],
  [8, 0, "rkill", <FolderPic />],
  [9, 0, "DigiDoc3", <DigiPic />],
  [10, 0, "Wise System", <EyePic />],
  [11, 0, "VLC media", <ConePic arrow />],
  [12, 0, "IrfanView", <SplatPic />],
  [0, 1, "Untitled 01\nRahvahääled", <ConePic />],
  [0, 2, "LGMobile Air", <BluePic />],
  [0, 3, "oips_video.m", <ConePic />],
  [0, 4, "2017-07-15\n19_05_03-...", <PdfPic />],
  [0, 5, "2017-07-15\n19_06_05-...", <PdfPic />],
  [12, 1, "Winamp", <BoltPic />],
  [12, 2, "DigiDoc3\nClient", <BadgePic word="iDoc³" />],
  [12, 3, "Avidemux 2.6\n- 64 bits", <ClapperPic />],
  [12, 4, "ID-kaardi\nhaldusvahend", <BadgePic word="iliit" inverse />],
  [12, 5, "Xvid", <PlayPic />],
  [12, 6, "Zune", <WindowPic />],
];

export default function App() {
  return (
    <Screen>
      <Global />
      <Desktop>
        <Watermark>Safe Mode</Watermark>
        <Watermark $right>Safe Mode</Watermark>
        <Watermark $center>Microsoft (R) Windows (R) (Build 7601: Service Pack 1)</Watermark>
        <Watermark $bottom>Safe Mode</Watermark>
        <Watermark $bottom $right>Safe Mode</Watermark>
        {shortcuts.map(([col, row, label, picture]) => (
          <Shortcut key={`${col}-${row}`} $x={col * 78 - 1} $y={row * 103 + 7}>
            {picture}
            <span>{label}</span>
          </Shortcut>
        ))}
        <Explorer x={147} y={97} />
        <Explorer x={122} y={72} title="W10 (C:)" />
        <Explorer x={172} y={122} contents />
        <Everything />
        <Pointer viewBox="0 0 8 15" aria-hidden="true"><path d="M4.500 0v14M1 14.500h3M5 14.500h3" stroke="#e6e6e6" /></Pointer>
      </Desktop>
      <Bar />
    </Screen>
  );
}
